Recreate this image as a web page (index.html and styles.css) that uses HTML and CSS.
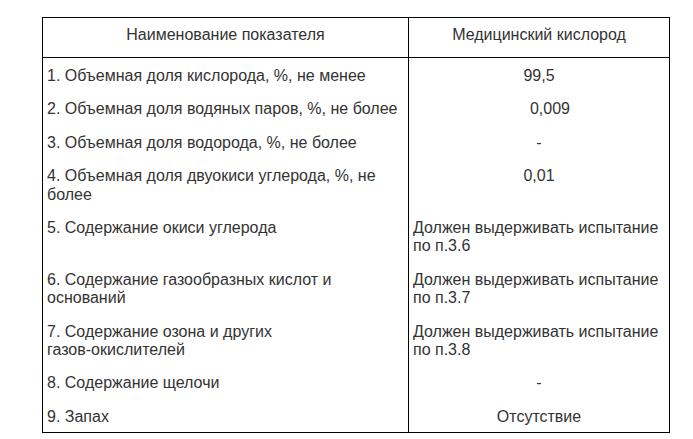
FILE: index.html
```html
<!DOCTYPE html>
<html lang="ru">
<head>
<meta charset="utf-8">
<title>Медицинский кислород</title>
<link rel="stylesheet" href="styles.css">
</head>
<body>
<table class="spec">
  <colgroup><col class="c-name"><col class="c-val"></colgroup>
  <thead>
    <tr><th>Наименование показателя</th><th>Медицинский кислород</th></tr>
  </thead>
  <tbody>
    <tr><td>1. Объемная доля кислорода, %, не менее</td><td class="num">99,5</td></tr>
    <tr><td>2. Объемная доля водяных паров, %, не более</td><td class="num"><span class="shift">0,009</span></td></tr>
    <tr><td>3. Объемная доля водорода, %, не более</td><td class="num">-</td></tr>
    <tr><td>4. Объемная доля двуокиси углерода, %, не более</td><td class="num">0,01</td></tr>
    <tr><td>5. Содержание окиси углерода</td><td>Должен выдерживать испытание по п.3.6</td></tr>
    <tr><td>6. Содержание газообразных кислот и оснований</td><td>Должен выдерживать испытание по п.3.7</td></tr>
    <tr><td>7. Содержание озона и других <span class="nowrap">газов-окислителей</span></td><td>Должен выдерживать испытание по п.3.8</td></tr>
    <tr><td>8. Содержание щелочи</td><td class="num">-</td></tr>
    <tr><td>9. Запах</td><td class="num">Отсутствие</td></tr>
  </tbody>
</table>
</body>
</html>
```

FILE: styles.css
```css
html, body {
  margin: 0;
  padding: 0;
  background: #ffffff;
}
body {
  font-family: "Liberation Sans", Arial, sans-serif;
  font-size: 16px;
  line-height: 18.4px;
  color: #333333;
}
.spec {
  margin: 17px 0 0 42px;
  width: 628px;
  border-collapse: collapse;
  table-layout: fixed;
  border: 1px solid #000;
}
.c-name { width: 366px; }
.spec th {
  font-weight: normal;
  text-align: center;
  padding: 8px 4px 12.6px;
  border-bottom: 1px solid #000;
  border-right: 1px solid #000;
}
.spec td {
  vertical-align: top;
  text-align: left;
  padding: 9px 4px 6px;
  border-right: 1px solid #000;
}
.spec td.num { text-align: center; }
.shift { padding-left: 22px; }
.nowrap { white-space: nowrap; }
```
